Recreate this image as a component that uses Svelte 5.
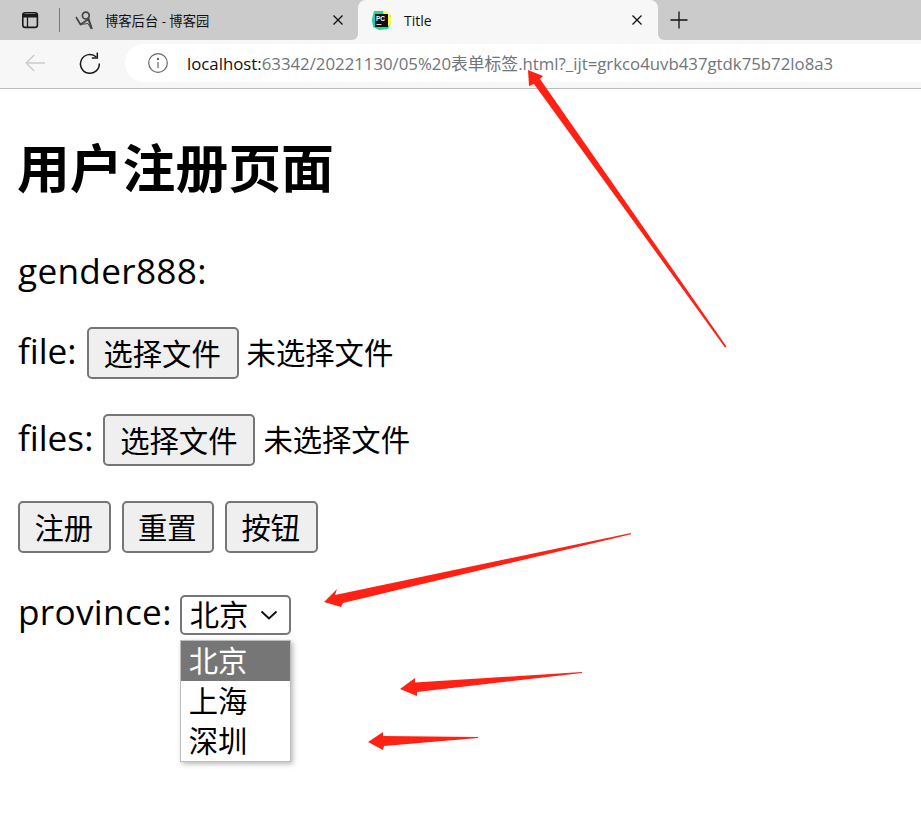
<script>
  const options = ['北京', '上海', '深圳'];
</script>

<div class="shot">
  <header class="tabstrip">
    <div class="left">
      <svg class="winicon" width="20" height="20" viewBox="0 0 20 20" fill="none" stroke="#1a1a1a" stroke-width="1.6">
        <rect x="2.8" y="2.8" width="14.6" height="14.6" rx="2.5" />
        <path d="M3 4.5h14V7H3z" fill="#1a1a1a" stroke-width="1" />
        <path d="M7.5 7v10" stroke-width="1.3" />
      </svg>
      <span class="divider"></span>
      <svg class="favicon" width="19" height="19" viewBox="0 0 19 19" fill="none" stroke="#444" stroke-width="1.7">
        <circle cx="10.8" cy="4.6" r="3.4" />
        <path d="M1 6l4.5 7.5L13 8.5" />
        <path d="M13 6.5l3.8 11.5" stroke-width="2.2" />
        <path d="M5.5 13.5l7.5-1 3 5" stroke-width="1" />
      </svg>
      <span class="tabtitle first">博客后台 - 博客园</span>
      <svg class="close" width="12" height="12" viewBox="0 0 12 12" stroke="#111" stroke-width="1.3"><path d="M1.5 1.5l9 9M10.5 1.5l-9 9" /></svg>
    </div>
    <div class="activewrap">
      <div class="active">
        <svg class="pc" width="21" height="21" viewBox="0 0 21 21">
          <path d="M3 1h11l6 5v7l-3 6-9 1-6-3-1-8z" fill="#21d789" />
          <path d="M12 1h4l4 6v7l-4 3-3-8z" fill="#fcf84a" />
          <path d="M1 11l3-8 5 2-2 12-4-1z" fill="#07c3f2" opacity=".55" />
          <rect x="4" y="4" width="13" height="13" fill="#111" />
          <text x="5" y="10.5" class="pctext">PC</text>
          <rect x="5.5" y="14" width="5" height="1" fill="#ddd" />
        </svg>
        <span class="tabtitle">Title</span>
        <svg class="close two" width="12" height="12" viewBox="0 0 12 12" stroke="#111" stroke-width="1.3"><path d="M1.5 1.5l9 9M10.5 1.5l-9 9" /></svg>
      </div>
    </div>
    <div class="right">
      <svg class="plus" width="18" height="18" viewBox="0 0 18 18" stroke="#111" stroke-width="1.3"><path d="M9 .5v17M.5 9h17" /></svg>
    </div>
  </header>

  <nav class="toolbar">
    <svg class="back" width="20" height="18" viewBox="0 0 20 18" fill="none" stroke="#cccccc" stroke-width="1.4"><path d="M20 9H1.2M9.2 1L1.2 9l8 8" /></svg>
    <svg class="reload" width="24" height="24" viewBox="0 0 24 24" fill="none" stroke="#1a1a1a" stroke-width="1.5">
      <path d="M18.3 6a9.4 9.4 0 1 0 3 6.5" />
      <path d="M19.3 1.6V7h-5.5" />
    </svg>
    <div class="omnibox">
      <svg class="info" width="20" height="20" viewBox="0 0 20 20" fill="none" stroke="#666" stroke-width="1.2">
        <circle cx="10" cy="10" r="9.3" />
        <path d="M10 9v6" />
        <circle cx="10" cy="6" r=".6" fill="#666" />
      </svg>
      <span class="url"><span class="host">localhost:</span>63342/20221130/05%20表单标签.html?_ijt=grkco4uvb437gtdk75b72lo8a3</span>
    </div>
  </nav>

  <main class="page">
    <h2>用户注册页面</h2>
    <div class="row gender"><span class="wide">gender888:</span></div>
    <div class="row">
      <span>file:</span>
      <button class="choose">选择文件</button>
      <span class="none">未选择文件</span>
    </div>
    <div class="row files">
      <span>files:</span>
      <button class="choose">选择文件</button>
      <span class="none">未选择文件</span>
    </div>
    <div class="row btns">
      <button class="act">注册</button>
      <button class="act">重置</button>
      <button class="act">按钮</button>
    </div>
    <div class="row province">
      <span class="wide">province:</span>
      <div class="selectwrap">
        <div class="select">
          <span>北京</span>
          <svg width="18" height="10" viewBox="0 0 18 10" fill="none" stroke="#111" stroke-width="2"><path d="M1.5 1.5L9 8.5l7.5-7" /></svg>
        </div>
        <ul class="menu">
          {#each options as o, i}
            <li class:sel={i === 0}>{o}</li>
          {/each}
        </ul>
      </div>
    </div>
  </main>

  <svg class="arrows" width="921" height="836" viewBox="0 0 921 836" fill="#ff2113">
    <polygon points="528,70 543,76 540,79 726.5,346.5 725,347.5 534,84 529,86" />
    <polygon points="324,602 337,589 335,595 631,533 631,534.2 343,603 341,607" />
    <polygon points="400,689 415,678 415,682.5 582,672 582,673 417,692 417,696" />
    <polygon points="368,742 383,732 383,736 478,737 478,738 384,746 383,750" />
  </svg>
</div>

<style>
  :global(body) { margin: 0; background: #fff; }
  .shot {
    position: relative;
    width: 921px;
    height: 836px;
    overflow: hidden;
    font-family: "Open Sans", "Noto Sans CJK SC", sans-serif;
    color: #000;
    background: #fff;
  }
  .tabstrip { display: flex; height: 40px; background: #f7f7f7; }
  .left {
    width: 358px;
    background: #cbcbcb;
    border-bottom-right-radius: 6px;
    display: flex;
    align-items: center;
    padding-left: 20px;
    box-sizing: border-box;
  }
  .divider { width: 1px; height: 24px; background: #777; margin-left: 19px; }
  .favicon { margin-left: 15px; }
  .tabtitle { font-size: 13.3px; color: #111; }
  .tabtitle.first { margin-left: 11px; }
  .close { margin-left: auto; margin-right: 14px; }
  .activewrap { width: 300px; background: #cbcbcb; }
  .active {
    height: 40px;
    background: #f7f7f7;
    border-radius: 8px 8px 0 0;
    display: flex;
    align-items: center;
    padding-left: 13px;
    box-sizing: border-box;
  }
  .active .tabtitle { margin-left: 12px; font-size: 14px; }
  .close.two { margin-right: 15px; }
  .pctext { font: bold 6.5px "Liberation Sans", sans-serif; fill: #fff; }
  .right {
    flex: 1;
    background: #cbcbcb;
    border-bottom-left-radius: 6px;
    display: flex;
    align-items: center;
    padding-left: 12px;
  }
  .toolbar {
    height: 45px;
    background: #f7f7f7;
    border-bottom: 1px solid #bdbdbd;
    display: flex;
    align-items: center;
    padding: 0 0 3px 25px;
  }
  .back { flex: none; }
  .reload { flex: none; margin-left: 33px; }
  .omnibox {
    margin-left: 23px;
    flex: 1;
    height: 38px;
    background: #fff;
    border-radius: 19px 0 0 19px;
    display: flex;
    align-items: center;
    padding-left: 23px;
  }
  .url { margin-left: 19px; font-size: 16.8px; color: #70757a; white-space: nowrap; }
  .host { color: #111; }

  .page { padding: 0 0 0 18px; }
  h2 {
    margin: 39px 0 38px -1px;
    height: 80px;
    line-height: 80px;
    font-size: 52.8px;
    font-weight: 700;
  }
  .row {
    display: flex;
    align-items: baseline;
    height: 52px;
    margin-bottom: 35px;
    font-size: 35.2px;
    line-height: 48px;
    white-space: nowrap;
  }
  .gender { height: 45px; }
  .wide { letter-spacing: 0.3px; }
  .files { margin-bottom: 36px; }
  .btns { margin-bottom: 34px; }
  button {
    font: inherit;
    font-size: 29.33px;
    color: #000;
    height: 52px;
    background: #efefef;
    border: 2px solid #767676;
    border-radius: 5px;
    padding: 2px 1px 0 0;
    box-sizing: border-box;
    line-height: 44px;
  }
  .choose { width: 152px; margin: 1px 0 0 10px; align-self: flex-start; }
  .none {
    font-size: 29.33px;
    margin-left: 8px;
    align-self: center;
    line-height: 50px;
    padding-top: 2px;
  }
  .act { width: 92.5px; margin-right: 11px; }
  .selectwrap { position: relative; margin-left: 8px; align-self: flex-start; margin-top: 8px; }
  .select {
    box-sizing: border-box;
    width: 111px;
    height: 40px;
    border: 2px solid #767676;
    border-radius: 5px;
    display: flex;
    align-items: center;
    justify-content: space-between;
    padding: 0 11px 0 8px;
    font-size: 29.33px;
    line-height: 36px;
    background: #fff;
  }
  .menu {
    position: absolute;
    left: 0;
    top: 45px;
    width: 109px;
    margin: 0;
    padding: 0;
    list-style: none;
    background: #fff;
    border: 1px solid #bdbdbd;
    box-shadow: 2px 2px 5px rgba(0, 0, 0, .28);
    font-size: 29.33px;
    line-height: 41px;
  }
  .menu li { padding-left: 8px; height: 40px; }
  .menu li.sel { background: #767676; color: #fff; }
  .arrows { position: absolute; left: 0; top: 0; pointer-events: none; }
</style>
